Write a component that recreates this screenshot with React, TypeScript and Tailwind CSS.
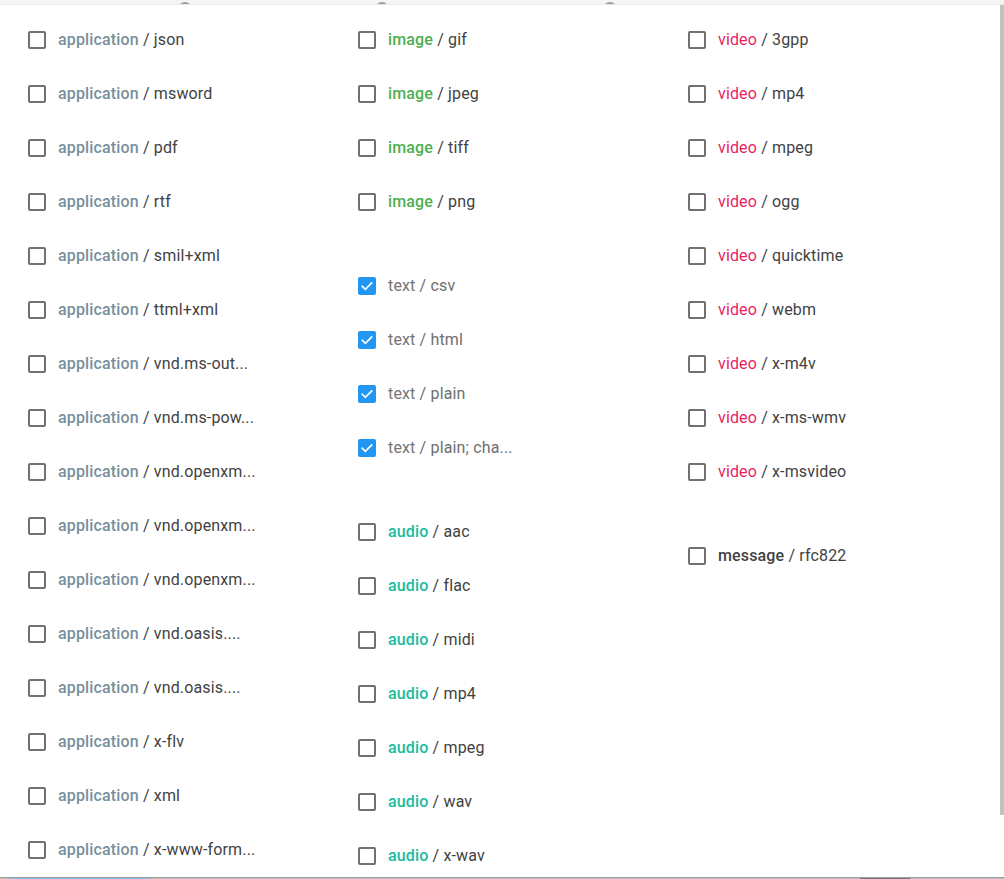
import React from "react";

type Item = { type: string; sub: string; checked?: boolean };
type Group = { items: Item[] };

const TYPE_STYLE: Record<string, string> = {
  application: "text-[#78909c] font-medium",
  image: "text-[#4caf50] font-medium",
  text: "text-[#757575]",
  audio: "text-[#1abc9c] font-medium",
  video: "text-[#e91e63]",
  message: "text-[#424242] font-medium",
};

const SUB_STYLE: Record<string, string> = {
  text: "text-[#6e6e6e]",
};

const columns: Group[][] = [
  [
    {
      items: [
        "json",
        "msword",
        "pdf",
        "rtf",
        "smil+xml",
        "ttml+xml",
        "vnd.ms-out...",
        "vnd.ms-pow...",
        "vnd.openxm...",
        "vnd.openxm...",
        "vnd.openxm...",
        "vnd.oasis....",
        "vnd.oasis....",
        "x-flv",
        "xml",
        "x-www-form...",
      ].map((sub) => ({ type: "application", sub })),
    },
  ],
  [
    { items: ["gif", "jpeg", "tiff", "png"].map((sub) => ({ type: "image", sub })) },
    {
      items: ["csv", "html", "plain", "plain; cha..."].map((sub) => ({
        type: "text",
        sub,
        checked: true,
      })),
    },
    {
      items: ["aac", "flac", "midi", "mp4", "mpeg", "wav", "x-wav"].map((sub) => ({
        type: "audio",
        sub,
      })),
    },
  ],
  [
    {
      items: ["3gpp", "mp4", "mpeg", "ogg", "quicktime", "webm", "x-m4v", "x-ms-wmv", "x-msvideo"].map(
        (sub) => ({ type: "video", sub })
      ),
    },
    { items: [{ type: "message", sub: "rfc822" }] },
  ],
];

function Checkbox({ checked }: { checked?: boolean }) {
  if (checked) {
    return (
      <span className="flex h-[18px] w-[18px] shrink-0 items-center justify-center rounded-[2px] bg-[#2196f3]">
        <svg viewBox="0 0 24 24" className="h-[16px] w-[16px]" fill="none">
          <path d="M5 12.5l4.5 4.5L19 7.5" stroke="#fff" strokeWidth="2.6" strokeLinecap="square" />
        </svg>
      </span>
    );
  }
  return <span className="h-[18px] w-[18px] shrink-0 rounded-[2px] border-2 border-[#707070] bg-white" />;
}

function Row({ item }: { item: Item }) {
  return (
    <label className="flex h-[54px] items-center gap-3">
      <Checkbox checked={item.checked} />
      <span className="whitespace-nowrap text-[16px] leading-none tracking-[0.15px]">
        <span className={TYPE_STYLE[item.type]}>{item.type}</span>
        <span className={SUB_STYLE[item.type] ?? "text-[#424242]"}> / {item.sub}</span>
      </span>
    </label>
  );
}

export default function App() {
  return (
    <div
      className="flex h-[879px] w-[1004px] flex-col overflow-hidden bg-white"
      style={{ fontFamily: "Roboto, 'Liberation Sans', sans-serif" }}
    >
      <div className="flex h-[5px] shrink-0 overflow-hidden border-b border-[#e8e8e8] bg-[#f5f5f5]">
        <span className="ml-[178px] mt-[2px] h-[14px] w-[14px] shrink-0 rounded-full bg-[#9e9e9e]" />
        <span className="ml-[183px] mt-[2px] h-[14px] w-[14px] shrink-0 rounded-full bg-[#9e9e9e]" />
        <span className="ml-[214px] mt-[2px] h-[14px] w-[14px] shrink-0 rounded-full bg-[#9e9e9e]" />
      </div>
      <div className="flex h-[872px] shrink-0">
        <div className="grid w-[1000px] grid-cols-[330px_330px_340px] pl-[28px] pt-[8px]">
          {columns.map((groups, ci) => (
            <div key={ci} className="flex flex-col gap-[30px]">
              {groups.map((g, gi) => (
                <div key={gi} className="flex flex-col">
                  {g.items.map((item, ii) => (
                    <Row key={ii} item={item} />
                  ))}
                </div>
              ))}
            </div>
          ))}
        </div>
        <div className="w-[4px] shrink-0 bg-white">
          <div className="h-[810px] w-full bg-[#c1c1c1]" />
        </div>
      </div>
      <div className="h-[1px] shrink-0 bg-[#9e9e9e]" />
      <div className="flex h-[1px] shrink-0 items-start bg-[#bdbdbd]">
        <span className="ml-[10px] h-[1px] w-[140px] bg-[#8fb6e6]" />
        <span className="ml-[710px] h-[1px] w-[50px] bg-[#777]" />
      </div>
    </div>
  );
}
